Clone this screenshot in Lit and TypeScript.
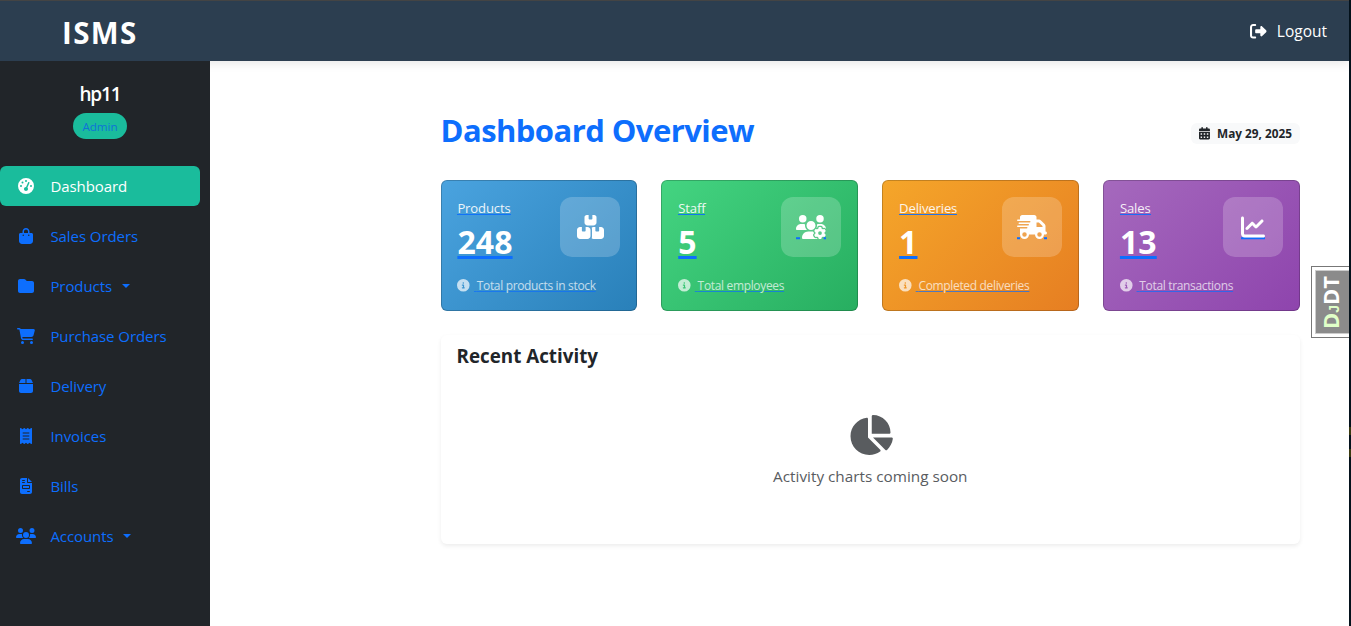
import { LitElement, html, css, svg, nothing } from "lit";
import { customElement, property } from "lit/decorators.js";

interface Glyph { w: number; d: string; }

const USERS_LEFT = "M144 160A80 80 0 1 0 144 0a80 80 0 1 0 0 160zm368 0A80 80 0 1 0 512 0a80 80 0 1 0 0 160zM0 298.7C0 310.4 9.6 320 21.3 320H234.7c.2 0 .4 0 .7 0c-26.6-23.5-43.3-57.8-43.3-96c0-7.6 .7-15 1.9-22.3c-13.6-6.3-28.7-9.7-44.6-9.7H106.7C47.8 192 0 239.8 0 298.7z";

const GLYPHS: Record<string, Glyph> = {
  gauge: { w: 512, d: "M0 256a256 256 0 1 1 512 0A256 256 0 1 1 0 256zM288 96a32 32 0 1 0 -64 0 32 32 0 1 0 64 0zM256 416c35.3 0 64-28.7 64-64c0-17.4-6.9-33.1-18.1-44.6L366 161.7c5.3-12.1-.2-26.3-12.3-31.6s-26.3 .2-31.6 12.3L257.9 288c-.6 0-1.3 0-1.9 0c-35.3 0-64 28.7-64 64s28.7 64 64 64zM176 144a32 32 0 1 0 -64 0 32 32 0 1 0 64 0zM96 288a32 32 0 1 0 0-64 32 32 0 1 0 0 64zm352-32a32 32 0 1 0 -64 0 32 32 0 1 0 64 0z" },
  bag: { w: 448, d: "M160 112c0-35.3 28.7-64 64-64s64 28.7 64 64v48H160V112zm-48 48H48c-26.5 0-48 21.5-48 48V416c0 53 43 96 96 96H352c53 0 96-43 96-96V208c0-26.5-21.5-48-48-48H336V112C336 50.1 285.9 0 224 0S112 50.1 112 112v48zm24 48a24 24 0 1 1 0 48 24 24 0 1 1 0-48zm152 24a24 24 0 1 1 48 0 24 24 0 1 1 -48 0z" },
  folder: { w: 512, d: "M64 480H448c35.3 0 64-28.7 64-64V160c0-35.3-28.7-64-64-64H288c-10.1 0-19.6-4.7-25.6-12.8L243.2 57.6C231.1 41.5 212.1 32 192 32H64C28.7 32 0 60.7 0 96V416c0 35.3 28.7 64 64 64z" },
  cart: { w: 576, d: "M0 24C0 10.7 10.7 0 24 0H69.5c22 0 41.5 12.8 50.6 32h411c26.3 0 45.5 25 38.6 50.4l-41 152.3c-8.5 31.4-37 53.3-69.5 53.3H170.7l5.4 28.5c2.2 11.3 12.1 19.5 23.6 19.5H488c13.3 0 24 10.7 24 24s-10.7 24-24 24H199.7c-34.6 0-64.3-24.6-70.7-58.5L77.4 54.5c-.7-3.8-4-6.5-7.9-6.5H24C10.7 48 0 37.3 0 24zM128 464a48 48 0 1 1 96 0 48 48 0 1 1 -96 0zm336-48a48 48 0 1 1 0 96 48 48 0 1 1 0-96z" },
  box: { w: 448, d: "M50.7 58.5L0 160H208V32H93.7C75.5 32 58.9 42.3 50.7 58.5zM240 160H448L397.3 58.5C389.1 42.3 372.5 32 354.3 32H240V160zm208 32H0V416c0 35.3 28.7 64 64 64H384c35.3 0 64-28.7 64-64V192z" },
  receipt: { w: 384, d: "M14 2.2C22.5-1.7 32.5-.3 39.6 5.8L80 40.4 120.4 5.8c9-7.7 22.3-7.7 31.2 0L192 40.4 232.4 5.8c9-7.7 22.3-7.7 31.2 0L304 40.4 344.4 5.8c7.1-6.1 17.1-7.5 25.6-3.6s14 12.4 14 21.8V488c0 9.4-5.5 17.9-14 21.8s-18.5 2.5-25.6-3.6L304 471.6l-40.4 34.6c-9 7.7-22.3 7.7-31.2 0L192 471.6l-40.4 34.6c-9 7.7-22.3 7.7-31.2 0L80 471.6 39.6 506.2c-7.1 6.1-17.1 7.5-25.6 3.6S0 497.4 0 488V24C0 14.6 5.5 6.1 14 2.2zM96 144c-8.8 0-16 7.2-16 16s7.2 16 16 16H288c8.8 0 16-7.2 16-16s-7.2-16-16-16H96zM80 352c0 8.8 7.2 16 16 16H288c8.8 0 16-7.2 16-16s-7.2-16-16-16H96c-8.8 0-16 7.2-16 16zM96 240c-8.8 0-16 7.2-16 16s7.2 16 16 16H288c8.8 0 16-7.2 16-16s-7.2-16-16-16H96z" },
  invoice: { w: 384, d: "M64 0C28.7 0 0 28.7 0 64V448c0 35.3 28.7 64 64 64H320c35.3 0 64-28.7 64-64V160H256c-17.7 0-32-14.3-32-32V0H64zM256 0V128H384L256 0zM80 64h64c8.8 0 16 7.2 16 16s-7.2 16-16 16H80c-8.8 0-16-7.2-16-16s7.2-16 16-16zm0 64h64c8.8 0 16 7.2 16 16s-7.2 16-16 16H80c-8.8 0-16-7.2-16-16s7.2-16 16-16zm16 96H288c17.7 0 32 14.3 32 32v64c0 17.7-14.3 32-32 32H96c-17.7 0-32-14.3-32-32V256c0-17.7 14.3-32 32-32zm0 32v64H288V256H96zM240 416h64c8.8 0 16 7.2 16 16s-7.2 16-16 16H240c-8.8 0-16-7.2-16-16s7.2-16 16-16z" },
  users: { w: 640, d: "M144 0a80 80 0 1 1 0 160A80 80 0 1 1 144 0zM512 0a80 80 0 1 1 0 160A80 80 0 1 1 512 0zM0 298.7C0 239.8 47.8 192 106.7 192h42.7c15.9 0 31 3.5 44.6 9.7c-1.3 7.2-1.9 14.7-1.9 22.3c0 38.2 16.8 72.5 43.3 96c-.2 0-.4 0-.7 0H21.3C9.6 320 0 310.4 0 298.7zM405.3 320c-.2 0-.4 0-.7 0c26.6-23.5 43.3-57.8 43.3-96c0-7.6-.7-15-1.9-22.3c13.6-6.3 28.7-9.7 44.6-9.7h42.7C592.2 192 640 239.8 640 298.7c0 11.8-9.6 21.3-21.3 21.3H405.3zM224 224a96 96 0 1 1 192 0 96 96 0 1 1 -192 0zM128 485.3C128 411.7 187.7 352 261.3 352H378.7C452.3 352 512 411.7 512 485.3c0 14.7-11.9 26.7-26.7 26.7H154.7c-14.7 0-26.7-11.9-26.7-26.7z" },
  usersGear: { w: 640, d: USERS_LEFT + "M320 320c24 0 45.9-8.8 62.7-23.3c2.5-3.7 5.2-7.3 8-10.7c2.7-3.3 5.7-6.1 9-8.3C410 262.3 416 243.9 416 224c0-53-43-96-96-96s-96 43-96 96s43 96 96 96zm65.4 60.2c-10.3-5.9-18.1-16.2-20.8-28.2H261.3C187.7 352 128 411.7 128 485.3c0 14.7 11.9 26.7 26.7 26.7H455.2c-2.1-5.2-3.2-10.9-3.2-16.4v-3c-1.3-.7-2.7-1.5-4-2.3l-2.6 1.5c-16.8 9.7-40.5 8-54.7-9.7c-4.5-5.6-8.6-11.5-12.4-17.6l-.1-.2-.1-.2-2.4-4.1-.1-.2-.1-.2c-3.4-6.2-6.4-12.6-9-19.3c-8.2-21.2 2.2-42.6 19-52.3l2.7-1.5c0-.8 0-1.5 0-2.3s0-1.5 0-2.3l-2.7-1.5zM533.3 192H490.7c-15.9 0-31 3.5-44.6 9.7c1.3 7.2 1.9 14.7 1.9 22.3c0 17.4-3.5 33.9-9.7 49c2.5 .9 4.9 2 7.1 3.3l2.6 1.5c1.3-.8 2.6-1.6 4-2.3v-3c0-19.4 13.3-39.1 35.8-42.6c7.9-1.2 16-1.9 24.2-1.9s16.3 .6 24.2 1.9c22.5 3.5 35.8 23.2 35.8 42.6v3c1.3 .7 2.7 1.5 4 2.3l2.6-1.5c16.8-9.7 40.5-8 54.7 9.7c2.3 2.8 4.5 5.8 6.6 8.7c-2.1-57.1-49-102.7-106.6-102.7zm91.3 163.9c6.3-3.6 9.5-11.1 6.8-18c-2.1-5.5-4.6-10.8-7.4-15.9l-2.3-4c-3.1-5.1-6.5-9.9-10.2-14.5c-4.6-5.7-12.7-6.7-19-3l-2.9 1.7c-9.2 5.3-20.4 4-29.6-1.3s-16.1-14.5-16.1-25.1v-3.4c0-7.3-4.9-13.8-12.1-14.9c-6.5-1-13.1-1.5-19.9-1.5s-13.4 .5-19.9 1.5c-7.2 1.1-12.1 7.6-12.1 14.9v3.4c0 10.6-6.9 19.8-16.1 25.1s-20.4 6.6-29.6 1.3l-2.9-1.7c-6.3-3.6-14.4-2.6-19 3c-3.7 4.6-7.1 9.5-10.2 14.6l-2.3 3.9c-2.8 5.1-5.3 10.4-7.4 15.9c-2.6 6.8 .5 14.3 6.8 17.9l2.9 1.7c9.2 5.3 13.7 15.8 13.7 26.4s-4.5 21.1-13.7 26.4l-3 1.7c-6.3 3.6-9.5 11.1-6.8 17.9c2.1 5.5 4.6 10.7 7.4 15.8l2.4 4.1c3 5.1 6.4 9.9 10.1 14.5c4.6 5.7 12.7 6.7 19 3l2.9-1.7c9.2-5.3 20.4-4 29.6 1.3s16.1 14.5 16.1 25.1v3.4c0 7.3 4.9 13.8 12.1 14.9c6.5 1 13.1 1.5 19.9 1.5s13.4-.5 19.9-1.5c7.2-1.1 12.1-7.6 12.1-14.9v-3.4c0-10.6 6.9-19.8 16.1-25.1s20.4-6.6 29.6-1.3l2.9 1.7c6.3 3.6 14.4 2.6 19-3c3.7-4.6 7.1-9.4 10.1-14.5l2.4-4.2c2.8-5.1 5.3-10.3 7.4-15.8c2.6-6.8-.5-14.3-6.8-17.9l-3-1.7c-9.2-5.3-13.7-15.8-13.7-26.4s4.5-21.1 13.7-26.4l3-1.7zM472 384a40 40 0 1 1 80 0 40 40 0 1 1 -80 0z" },
  boxes: { w: 576, d: "M248 0H208c-26.5 0-48 21.5-48 48V160c0 35.3 28.7 64 64 64H352c35.3 0 64-28.7 64-64V48c0-26.5-21.5-48-48-48H328V80c0 8.8-7.2 16-16 16H264c-8.8 0-16-7.2-16-16V0zM64 256c-35.3 0-64 28.7-64 64V448c0 35.3 28.7 64 64 64H224c35.3 0 64-28.7 64-64V320c0-35.3-28.7-64-64-64H184v80c0 8.8-7.2 16-16 16H120c-8.8 0-16-7.2-16-16V256H64zM352 512H512c35.3 0 64-28.7 64-64V320c0-35.3-28.7-64-64-64H472v80c0 8.8-7.2 16-16 16H408c-8.8 0-16-7.2-16-16V256H352c-15 0-28.8 5.1-39.7 13.8c4.9 10.4 7.7 22 7.7 34.2V464c0 12.2-2.8 23.8-7.7 34.2C323.2 506.9 337 512 352 512z" },
  truck: { w: 640, d: "M112 0C85.5 0 64 21.5 64 48V96H16c-8.8 0-16 7.2-16 16s7.2 16 16 16H64 272c8.8 0 16 7.2 16 16s-7.2 16-16 16H64 48c-8.8 0-16 7.2-16 16s7.2 16 16 16H64 240c8.8 0 16 7.2 16 16s-7.2 16-16 16H64 16c-8.8 0-16 7.2-16 16s7.2 16 16 16H64 208c8.8 0 16 7.2 16 16s-7.2 16-16 16H64V416c0 53 43 96 96 96s96-43 96-96H384c0 53 43 96 96 96s96-43 96-96h32c17.7 0 32-14.3 32-32s-14.3-32-32-32V288 256 237.3c0-17-6.7-33.3-18.7-45.3L512 114.7c-12-12-28.3-18.7-45.3-18.7H416V48c0-26.5-21.5-48-48-48H112zM544 237.3V256H416V160h50.7L544 237.3zM160 368a48 48 0 1 1 0 96 48 48 0 1 1 0-96zm272 48a48 48 0 1 1 96 0 48 48 0 1 1 -96 0z" },
  line: { w: 512, d: "M64 64c0-17.7-14.3-32-32-32S0 46.3 0 64V400c0 44.2 35.8 80 80 80H480c17.7 0 32-14.3 32-32s-14.3-32-32-32H80c-8.8 0-16-7.2-16-16V64zm406.6 86.6c12.5-12.5 12.5-32.8 0-45.3s-32.8-12.5-45.3 0L320 210.7l-57.4-57.4c-12.5-12.5-32.8-12.5-45.3 0l-112 112c-12.5 12.5-12.5 32.8 0 45.3s32.8 12.5 45.3 0L240 221.3l57.4 57.4c12.5 12.5 32.8 12.5 45.3 0l128-128z" },
  info: { w: 512, d: "M256 512A256 256 0 1 0 256 0a256 256 0 1 0 0 512zM216 336h24V272H216c-13.3 0-24-10.7-24-24s10.7-24 24-24h48c13.3 0 24 10.7 24 24v88h8c13.3 0 24 10.7 24 24s-10.7 24-24 24H216c-13.3 0-24-10.7-24-24s10.7-24 24-24zm40-208a32 32 0 1 1 0 64 32 32 0 1 1 0-64z" },
  pie: { w: 576, d: "M304 240V16.6c0-9 7-16.6 16-16.6C443.7 0 544 100.3 544 224c0 9-7.6 16-16.6 16H304zM32 272C32 150.7 122.1 50.3 239 34.3c9.2-1.3 17 6.1 17 15.4V288L412.5 444.5c6.7 6.7 6.2 17.7-1.5 23.1C371.8 495.6 323.8 512 272 512C139.5 512 32 404.6 32 272zm526.4 16c9.3 0 16.6 7.8 15.4 17c-7.7 55.9-34.6 105.6-73.9 142.3c-6 5.6-15.4 5.2-21.2-.7L320 288H558.4z" },
  calendar: { w: 448, d: "M128 0c17.7 0 32 14.3 32 32V64H288V32c0-17.7 14.3-32 32-32s32 14.3 32 32V64h48c26.5 0 48 21.5 48 48v48H0V112C0 85.5 21.5 64 48 64H96V32c0-17.7 14.3-32 32-32zM0 192H448V464c0 26.5-21.5 48-48 48H48c-26.5 0-48-21.5-48-48V192zm64 80v32c0 8.8 7.2 16 16 16h32c8.8 0 16-7.2 16-16V272c0-8.8-7.2-16-16-16H80c-8.8 0-16 7.2-16 16zm128 0v32c0 8.8 7.2 16 16 16h32c8.8 0 16-7.2 16-16V272c0-8.8-7.2-16-16-16H208c-8.8 0-16 7.2-16 16zm144-16c-8.8 0-16 7.2-16 16v32c0 8.8 7.2 16 16 16h32c8.8 0 16-7.2 16-16V272c0-8.8-7.2-16-16-16H336zM64 400v32c0 8.8 7.2 16 16 16h32c8.8 0 16-7.2 16-16V400c0-8.8-7.2-16-16-16H80c-8.8 0-16 7.2-16 16zm144-16c-8.8 0-16 7.2-16 16v32c0 8.8 7.2 16 16 16h32c8.8 0 16-7.2 16-16V400c0-8.8-7.2-16-16-16H208zm112 16v32c0 8.8 7.2 16 16 16h32c8.8 0 16-7.2 16-16V400c0-8.8-7.2-16-16-16H336c-8.8 0-16 7.2-16 16z" },
  logout: { w: 512, d: "M377.9 105.9L500.7 228.7c7.2 7.2 11.3 17.1 11.3 27.3s-4.1 20.1-11.3 27.3L377.9 406.1c-6.4 6.4-15 9.9-24 9.9c-18.7 0-33.9-15.2-33.9-33.9l0-62.1-128 0c-17.7 0-32-14.3-32-32l0-64c0-17.7 14.3-32 32-32l128 0 0-62.1c0-18.7 15.2-33.9 33.9-33.9c9 0 17.6 3.6 24 9.9zM160 96L96 96c-17.7 0-32 14.3-32 32l0 256c0 17.7 14.3 32 32 32l64 0c17.7 0 32 14.3 32 32s-14.3 32-32 32l-64 0c-53 0-96-43-96-96L0 128C0 75 43 32 96 32l64 0c17.7 0 32 14.3 32 32s-14.3 32-32 32z" },
};

/** Solid glyph whose height is 1em; `rules` are [x, width] underline pieces in glyph units. */
@customElement("solid-icon")
class SolidIcon extends LitElement {
  @property() name = "info";
  @property({ attribute: false }) rules: number[][] = [];
  static styles = css`
    :host { display: inline-flex; height: 1em; }
    .glyph { display: block; height: 1em; overflow: visible; fill: currentColor; }
    .rule { fill: #0d6efd; }
  `;
  render() {
    const g = GLYPHS[this.name];
    return html`<svg class="glyph" viewBox="0 0 ${g.w} 512">
      ${this.rules.map(([x, w]) => svg`<rect class="rule" x=${x} y="474" width=${w} height="43"></rect>`)}
      <path d=${g.d}></path>
    </svg>`;
  }
}

@customElement("stat-card")
class StatCard extends LitElement {
  @property() label = "";
  @property() value = "";
  @property() note = "";
  @property() icon = "boxes";
  @property({ attribute: false }) rules: number[][] = [];
  @property({ reflect: true }) tone = "blue";
  static styles = css`
    :host {
      box-sizing: border-box; display: flex; flex-direction: column; height: 131px;
      padding: 16px 16px 0 15.8px; border: 1px solid rgba(0, 0, 0, 0.2); border-radius: 6px;
      background-origin: border-box; color: #fff;
    }
    :host([tone="blue"]) { background-image: linear-gradient(135deg, #4aa3df, #2980b9); }
    :host([tone="green"]) { background-image: linear-gradient(135deg, #44d481, #27ae60); }
    :host([tone="orange"]) { background-image: linear-gradient(135deg, #f5a62a, #e67e22); }
    :host([tone="purple"]) { background-image: linear-gradient(135deg, #a569bd, #8e44ad); }
    .top { display: flex; justify-content: space-between; height: 76px; }
    .texts { display: flex; flex-direction: column; align-items: flex-start; }
    .label {
      box-sizing: border-box; height: 18px; border-bottom: 1px solid #0d6efd;
      font-size: 13.1px; line-height: 22px; letter-spacing: -0.15px; opacity: 0.9;
    }
    .value {
      font-size: 32px; font-weight: 700; line-height: 40px; margin-top: 7px; letter-spacing: 0.1px;
      text-decoration: underline 3px #0d6efd; text-underline-offset: 2px;
    }
    .tile {
      display: flex; align-items: center; justify-content: center; width: 60px; height: 60px;
      border-radius: 12px; background: rgba(255, 255, 255, 0.2); font-size: 24px;
    }
    .foot { display: flex; align-items: center; height: 24px; opacity: 0.7; font-size: 12.6px; }
    .foot solid-icon { margin-top: 1px; }
    .note {
      font-size: 12px; letter-spacing: -0.34px; white-space: pre; line-height: 24px; margin: 2px 0 0 4px;
      text-decoration: underline 1px #0d6efd; text-underline-offset: 1px;
    }
  `;
  render() {
    return html`
      <div class="top">
        <div class="texts">
          <div class="label">${this.label}</div>
          <div class="value">${this.value}</div>
        </div>
        <div class="tile"><solid-icon name=${this.icon} .rules=${this.rules}></solid-icon></div>
      </div>
      <div class="foot"><solid-icon name="info"></solid-icon><span class="note"> ${this.note}</span></div>
    `;
  }
}

const NAV = [
  { icon: "gauge", text: "Dashboard", active: true },
  { icon: "bag", text: "Sales Orders" },
  { icon: "folder", text: "Products", menu: true },
  { icon: "cart", text: "Purchase Orders" },
  { icon: "box", text: "Delivery" },
  { icon: "receipt", text: "Invoices" },
  { icon: "invoice", text: "Bills" },
  { icon: "users", text: "Accounts", menu: true },
];

const STATS = [
  { label: "Products", value: "248", note: "Total products in stock", icon: "boxes", tone: "blue", rules: [] },
  { label: "Staff", value: "5", note: "Total employees", icon: "usersGear", tone: "green", rules: [[0, 86], [590, 50]] },
  { label: "Deliveries", value: "1", note: "Completed deliveries", icon: "truck", tone: "orange", rules: [[0, 64], [576, 64]] },
  { label: "Sales", value: "13", note: "Total transactions", icon: "line", tone: "purple", rules: [[0, 512]] },
];

@customElement("app-root")
class AppRoot extends LitElement {
  static styles = css`
    :host {
      display: flex; position: relative; width: 1351px; height: 626px; overflow: hidden;
      font-family: "Open Sans", "Noto Sans", sans-serif; font-size: 15px; color: #212529; background: #fff;
    }
    .page { flex: 1; display: flex; flex-direction: column; min-width: 0; }
    .edge {
      width: 2px; background: linear-gradient(#04121c 427px, #3a3a10 427px 435px, #04121c 435px 449px, #3a3a10 449px 457px, #04121c 457px);
    }
    .bar {
      position: relative; z-index: 1; box-sizing: border-box; height: 61px; border-top: 1px solid #444;
      display: flex; align-items: center; justify-content: space-between; padding: 0 22px 0 62px;
      background: #2c3e50; color: #fff; box-shadow: 0 2px 10px rgba(0, 0, 0, 0.1);
    }
    .brand { font-size: 29.5px; font-weight: 700; letter-spacing: 1.4px; line-height: 40px; padding-top: 3px; }
    .logout { display: flex; align-items: center; gap: 10px; font-size: 15.5px; }
    .logout solid-icon { font-size: 16.5px; }
    .body { flex: 1; display: flex; }
    .side { width: 210px; background: #212529; color: #0d6efd; position: relative; z-index: 2; }
    .who { width: 200px; height: 105px; display: flex; flex-direction: column; align-items: center; }
    .name { color: #fff; font-size: 19px; letter-spacing: -1.1px; font-weight: 600; line-height: 26px; padding-top: 20px; }
    .role {
      margin-top: 6px; height: 26px; line-height: 27px; padding: 0 9.5px; border-radius: 13px;
      background: #1abc9c; font-size: 11.6px; color: #0f72d8;
    }
    .nav { display: flex; flex-direction: column; gap: 10px; width: 200px; }
    .item { display: flex; align-items: center; height: 40px; border-radius: 6px; letter-spacing: -0.07px; }
    .item.active { background: #1abc9c; color: #fff; }
    .slot { width: 20px; margin: 0 14.4px 0 16px; display: flex; justify-content: center; font-size: 16px; }
    .caret { margin-left: 9.5px; border: 4px solid transparent; border-top-color: currentColor; border-bottom: 0; }
    .main { flex: 1; padding: 48px 49px 0 230.6px; }
    .head { display: flex; justify-content: space-between; height: 71px; }
    .title { margin: 0; font-size: 31px; font-weight: 700; letter-spacing: -0.56px; line-height: 42px; color: #0d6efd; }
    .date {
      display: flex; align-items: center; gap: 7px; height: 21px; margin-top: 14px; padding: 0 8px;
      border-radius: 6px; background: #f8f9fa; font-size: 11.8px; font-weight: 700; line-height: 16px;
    }
    .date span { padding-bottom: 1px; }
    .date solid-icon { font-size: 12.5px; }
    .stats { display: grid; grid-template-columns: repeat(4, 1fr); gap: 24px; }
    .panel {
      box-sizing: border-box; height: 209px; margin-top: 24px; padding: 6px 16px 0; border-radius: 6px;
      box-shadow: 0 2px 4px rgba(0, 0, 0, 0.075);
    }
    .panel-title { margin: 0; font-size: 18.8px; font-weight: 700; line-height: 30px; }
    .soon { display: flex; flex-direction: column; align-items: center; margin-top: 44px; color: #595c5f; }
    .soon solid-icon { font-size: 40px; }
    .soon-text { line-height: 24px; margin-top: 9px; font-size: 15.3px; }
    .tool {
      position: absolute; left: 1311px; top: 266px; width: 38px; height: 72px; box-sizing: border-box;
      border: 1px solid #777; border-right: 0; background: #fff; padding: 3px 0 3px 3px;
    }
    .tool-in {
      box-sizing: border-box; height: 100%; border: 1px solid #ccc; border-right: 0; background: #8b8b8b;
      display: flex; align-items: center; justify-content: center;
    }
    .tool-text {
      flex: none; transform: rotate(-90deg); white-space: nowrap; color: #fff;
      font-size: 22px; font-weight: 700; line-height: 30px; padding-bottom: 1px;
    }
    .dj { color: #e0ffc8; }
    .small { font-family: "Liberation Sans", sans-serif; font-size: 14px; }
  `;
  render() {
    return html`
      <div class="page">
        <header class="bar">
          <div class="brand">ISMS</div>
          <div class="logout"><solid-icon name="logout"></solid-icon><span>Logout</span></div>
        </header>
        <div class="body">
          <aside class="side">
            <div class="who"><div class="name">hp11</div><div class="role">Admin</div></div>
            <nav class="nav">
              ${NAV.map((n) => html`<div class="item ${n.active ? "active" : ""}">
                <span class="slot"><solid-icon name=${n.icon}></solid-icon></span>
                <span>${n.text}</span>${n.menu ? html`<span class="caret"></span>` : nothing}
              </div>`)}
            </nav>
          </aside>
          <main class="main">
            <div class="head">
              <h1 class="title">Dashboard Overview</h1>
              <div class="date"><solid-icon name="calendar"></solid-icon><span>May 29, 2025</span></div>
            </div>
            <div class="stats">
              ${STATS.map((s) => html`<stat-card label=${s.label} value=${s.value} note=${s.note}
                icon=${s.icon} tone=${s.tone} .rules=${s.rules}></stat-card>`)}
            </div>
            <section class="panel">
              <h2 class="panel-title">Recent Activity</h2>
              <div class="soon">
                <solid-icon name="pie"></solid-icon>
                <div class="soon-text">Activity charts coming soon</div>
              </div>
            </section>
          </main>
        </div>
      </div>
      <div class="edge"></div>
      <div class="tool"><div class="tool-in"><div class="tool-text"><span class="dj">D<span class="small">J</span></span>DT</div></div></div>
    `;
  }
}
